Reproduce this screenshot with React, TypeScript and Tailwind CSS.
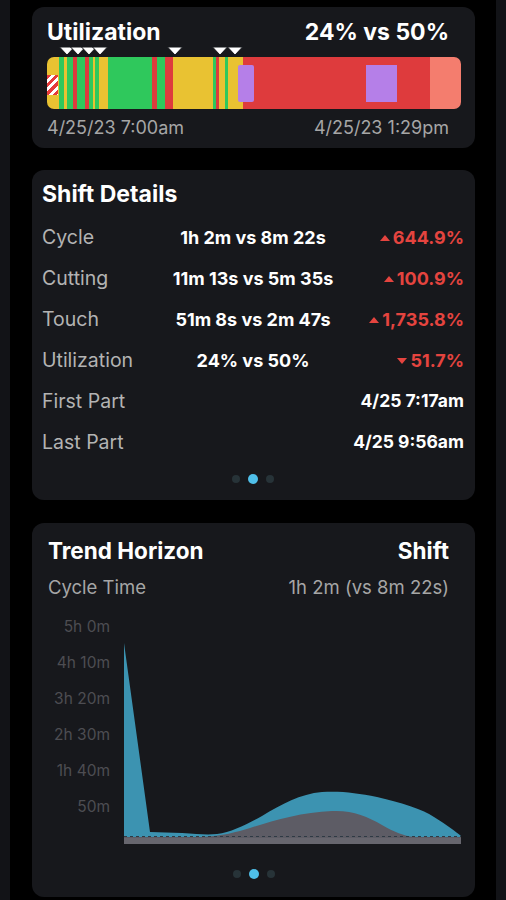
import React from "react";

// bar segment colours
const C: Record<string, string> = {
  Y: "#e9c232",
  G: "#2fc85c",
  R: "#de3b3d",
  S: "#f47d6e",
};

// utilization bar segments, [from, to, colour] in px from bar start
const segments: [number, number, string][] = [
  [0, 12, "Y"], [12, 17, "G"], [17, 20, "Y"], [20, 26, "G"], [26, 30, "R"], [30, 38, "G"],
  [38, 42, "R"], [42, 46, "G"], [46, 48, "Y"], [48, 52, "G"], [52, 61, "Y"], [61, 105, "G"],
  [105, 110, "R"], [110, 118, "G"], [118, 126, "R"], [126, 166, "Y"], [166, 169, "G"],
  [169, 172, "R"], [172, 178, "Y"], [178, 181, "G"], [181, 196, "Y"], [196, 383, "R"],
  [383, 414, "S"],
];

const markers = [20, 31, 42, 53, 128, 173, 188];

interface Row {
  label: string;
  value?: string;
  delta?: string;
  up?: boolean;
  right?: string;
}

const rows: Row[] = [
  { label: "Cycle", value: "1h 2m vs 8m 22s", delta: "644.9%", up: true },
  { label: "Cutting", value: "11m 13s vs 5m 35s", delta: "100.9%", up: true },
  { label: "Touch", value: "51m 8s vs 2m 47s", delta: "1,735.8%", up: true },
  { label: "Utilization", value: "24% vs 50%", delta: "51.7%", up: false },
  { label: "First Part", right: "4/25 7:17am" },
  { label: "Last Part", right: "4/25 9:56am" },
];

const yLabels = ["5h 0m", "4h 10m", "3h 20m", "2h 30m", "1h 40m", "50m"];

function Dots() {
  return (
    <div className="flex items-center justify-center gap-[8px]">
      <div className="w-[8px] h-[8px] rounded-full bg-[#273338]" />
      <div className="w-[10px] h-[10px] rounded-full bg-[#4fbfe9]" />
      <div className="w-[8px] h-[8px] rounded-full bg-[#273338]" />
    </div>
  );
}

export default function App() {
  return (
    <div className="flex w-full h-[900px] bg-black font-['Inter','Liberation_Sans',sans-serif] text-white overflow-hidden">
      <div className="w-[10px] bg-[#121317]" />
      <div className="flex-1 flex flex-col px-[22px] pr-[21px]">
        {/* Utilization card */}
        <div className="mt-[7px] rounded-[12px] bg-[#17181c] pt-[11px] pb-[9px] pl-[15px] pr-[14px]">
          <div className="flex justify-between pr-[12px] text-[23px] leading-[28px] font-bold">
            <span>Utilization</span>
            <span>24% vs 50%</span>
          </div>
          <svg width="414" height="11" className="block">
            {markers.map((m) => (
              <polygon
                key={m}
                points={`${m - 7.5},1 ${m + 7.5},1 ${m},9`}
                fill="#fff"
                stroke="#17181c"
                strokeWidth="1"
              />
            ))}
          </svg>
          <div className="relative flex h-[52px] rounded-[7px] overflow-hidden">
            {segments.map(([a, b, c], i) => (
              <div key={i} style={{ width: b - a, background: C[c] }} />
            ))}
            <div className="absolute left-0 top-[18px] w-[11px] h-[20px] bg-[repeating-linear-gradient(135deg,#e53a3a_0_3px,#ffffff_3px_6px)]" />
            <div className="absolute left-[191px] top-[8px] w-[16px] h-[37px] bg-[#b57fe8] rounded-[2px]" />
            <div className="absolute left-[319px] top-[8px] w-[31px] h-[37px] bg-[#b57fe8]" />
          </div>
          <div className="mt-[8px] flex justify-between pr-[12px] text-[18px] leading-[22px] text-[#a6a6a6]">
            <span>4/25/23 7:00am</span>
            <span>4/25/23 1:29pm</span>
          </div>
        </div>

        {/* Shift details card */}
        <div className="mt-[22px] rounded-[12px] bg-[#17181c] pt-[10px] pb-[16px] pl-[10px] pr-[11px]">
          <div className="text-[23px] leading-[28px] font-bold">Shift Details</div>
          <div className="mt-[9px]">
            {rows.map((r) => (
              <div key={r.label} className="grid grid-cols-[1fr_auto_1fr] items-center h-[41px]">
                <span className="text-[19.5px] text-[#b3b3b3]">{r.label}</span>
                <span className="text-[18px] font-bold">{r.value}</span>
                <span className="flex justify-end items-center gap-[3px]">
                  {r.delta && (
                    <>
                      <svg width="10" height="6" viewBox="0 0 10 6">
                        {r.up ? (
                          <polygon points="0,6 10,6 5,0" fill="#e5443f" />
                        ) : (
                          <polygon points="0,0 10,0 5,6" fill="#e5443f" />
                        )}
                      </svg>
                      <span className="text-[18px] font-bold text-[#e5443f]">{r.delta}</span>
                    </>
                  )}
                  {r.right && <span className="text-[17.5px] font-bold">{r.right}</span>}
                </span>
              </div>
            ))}
          </div>
          <div className="mt-[11px]">
            <Dots />
          </div>
        </div>

        {/* Trend horizon card */}
        <div className="mt-[23px] h-[374px] rounded-[12px] bg-[#17181c] pt-[14px]">
          <div className="pl-[16px] pr-[26px]">
            <div className="flex justify-between text-[22.5px] leading-[28px] font-bold">
              <span>Trend Horizon</span>
              <span>Shift</span>
            </div>
            <div className="mt-[10px] flex justify-between text-[18.5px] leading-[24px] text-[#a6a6a6]">
              <span>Cycle Time</span>
              <span>1h 2m (vs 8m 22s)</span>
            </div>
          </div>
          <svg width="443" height="235" className="block mt-[15px]">
            {yLabels.map((l, i) => (
              <text
                key={l}
                x="78"
                y={14 + i * 36}
                textAnchor="end"
                dominantBaseline="middle"
                fontSize="15.5"
                fill="#4d4d52"
              >
                {l}
              </text>
            ))}
            <path
              d="M92,230 L92,29 L118,218 L150,219 C165,220 175,221 185,220 C200,218 215,210 230,202 C250,190 268,180 290,178 C310,177 325,179 345,183 C370,189 390,195 402,203 C415,211 424,218 429,222 L429,230 Z"
              fill="#3c93b1"
            />
            <path
              d="M92,230 L92,223 L170,223 C190,222 205,218 218,214 C240,207 270,198 300,197 C320,196 335,202 350,211 C362,218 372,222 382,223 L429,223 L429,230 Z"
              fill="#5d5c65"
            />
            <line x1="92" y1="222.5" x2="429" y2="222.5" stroke="#2e3a44" strokeWidth="1" strokeDasharray="3 3" />
            <rect x="92" y="224" width="337" height="6" fill="#67666e" />
          </svg>
          <div className="mt-[20px]">
            <Dots />
          </div>
        </div>
      </div>
      <div className="w-[10px] bg-[#121317]" />
    </div>
  );
}
